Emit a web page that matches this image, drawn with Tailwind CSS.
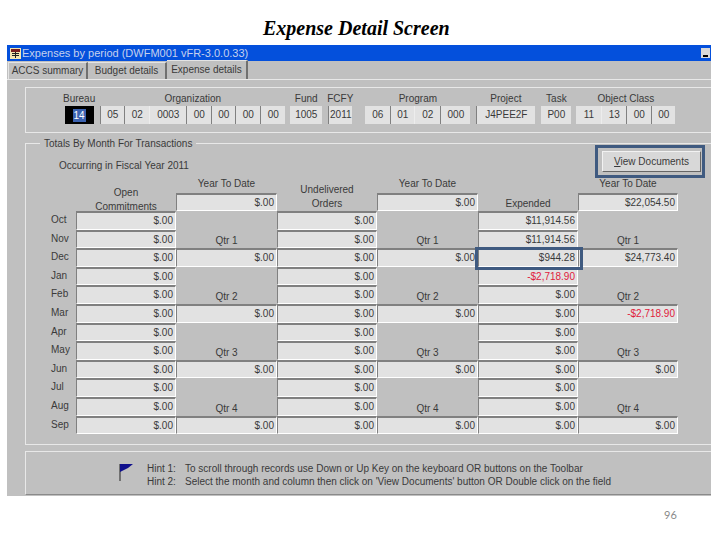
<!DOCTYPE html>
<html>
<head>
<meta charset="utf-8">
<title>Expense Detail Screen</title>
<script src="https://cdn.jsdelivr.net/npm/@tailwindcss/browser@4"></script>
</head>
<body class="bg-white w-[720px] h-[540px] overflow-hidden font-['Liberation_Sans',sans-serif]">

<h1 class="h-[45px] pt-[18px] pl-[263px] font-['Liberation_Serif',serif] font-bold italic text-[20px] leading-[20px] text-black">Expense Detail Screen</h1>

<div class="ml-[7px] w-[704px] h-[451px] bg-[#c0c0c0] text-[10px] leading-[13px] text-[#3a3a3a] flex flex-col">

	<!-- title bar -->
	<div class="h-[16px] bg-[#0450dc] flex items-center pl-[3px] pr-[1px] shrink-0">
		<svg width="11" height="11" viewBox="0 0 11 11" class="shrink-0"><rect width="11" height="11" fill="#f4e6b0"/><rect x="1" y="1" width="9" height="3" fill="#7a1f1f"/><rect x="2" y="5" width="7" height="1" fill="#222"/><rect x="2" y="7" width="7" height="1" fill="#222"/><rect x="5" y="4" width="1" height="6" fill="#222"/></svg>
		<span class="ml-[1px] text-[11px] text-[#c4d0ee] whitespace-nowrap">Expenses by period (DWFM001 vFR-3.0.0.33)</span>
		<span class="ml-auto w-[9px] h-[10px] bg-[#d8d8d8] flex items-end justify-center pb-[1px]"><span class="w-[5px] h-[2px] bg-black"></span></span>
	</div>

	<!-- tabs -->
	<div class="h-[19px] flex items-end pl-[1px] border-b border-[#e8e8e8] shrink-0">
		<div class="w-[80px] h-[17px] border-l border-t border-[#e4e4e4] border-r-2 border-r-[#707070] text-center pt-[1px] whitespace-nowrap">ACCS summary</div>
		<div class="w-[79px] h-[17px] border-t border-[#e4e4e4] border-r-2 border-r-[#707070] text-center pt-[1px] whitespace-nowrap">Budget details</div>
		<div class="w-[81px] h-[19px] border-t border-[#e4e4e4] border-r-2 border-r-[#707070] text-center pt-[2px] whitespace-nowrap">Expense details</div>
	</div>

	<div class="pl-[18px] pt-[7px] flex flex-col gap-[10px]">

		<!-- key fields -->
		<div class="h-[46px] border-y border-l border-[#e8e8e8] pl-[37px] pt-[3px] flex items-start">
			<div class="flex flex-col items-center mr-[5px]">
				<span class="h-[15px] pt-[1px]">Bureau</span>
				<div class="flex">
					<span class="w-[29px] h-[18px] bg-black flex items-center justify-center"><span class="bg-[#3b62b0] text-white px-[1px]">14</span></span>
				</div>
			</div>
			<div class="flex flex-col items-center mr-[5px]">
				<span class="h-[15px] pt-[1px]">Organization</span>
				<div class="flex">
					<span class="w-[24px] h-[18px] bg-[#e2e2e2] border-l border-[#808080] text-center leading-[18px]">05</span>
					<span class="w-[25px] h-[18px] bg-[#e2e2e2] border-l border-[#808080] text-center leading-[18px]">02</span>
					<span class="w-[37px] h-[18px] bg-[#e2e2e2] border-l border-[#ededed] text-center leading-[18px]">0003</span>
					<span class="w-[25px] h-[18px] bg-[#e2e2e2] border-l border-[#808080] text-center leading-[18px]">00</span>
					<span class="w-[24px] h-[18px] bg-[#e2e2e2] border-l border-[#808080] text-center leading-[18px]">00</span>
					<span class="w-[25px] h-[18px] bg-[#e2e2e2] border-l border-[#808080] text-center leading-[18px]">00</span>
					<span class="w-[25px] h-[18px] bg-[#e2e2e2] border-l border-[#808080] text-center leading-[18px]">00</span>
				</div>
			</div>
			<div class="flex flex-col items-center mr-[5px]">
				<span class="h-[15px] pt-[1px]">Fund</span>
				<span class="w-[32px] h-[18px] bg-[#e2e2e2] text-center leading-[18px]">1005</span>
			</div>
			<div class="flex flex-col items-center mr-[12px]">
				<span class="h-[15px] pt-[1px]">FCFY</span>
				<span class="w-[24px] h-[18px] bg-[#e2e2e2] border-l border-[#808080] text-center leading-[18px]">2011</span>
			</div>
			<div class="flex flex-col items-center mr-[6px]">
				<span class="h-[15px] pt-[1px]">Program</span>
				<div class="flex">
					<span class="w-[25px] h-[18px] bg-[#e2e2e2] text-center leading-[18px]">06</span>
					<span class="w-[24px] h-[18px] bg-[#e2e2e2] border-l border-[#808080] text-center leading-[18px]">01</span>
					<span class="w-[26px] h-[18px] bg-[#e2e2e2] border-l border-[#ededed] text-center leading-[18px]">02</span>
					<span class="w-[30px] h-[18px] bg-[#e2e2e2] border-l border-[#808080] text-center leading-[18px]">000</span>
				</div>
			</div>
			<div class="flex flex-col items-center mr-[6px]">
				<span class="h-[15px] pt-[1px]">Project</span>
				<span class="w-[59px] h-[18px] bg-[#e2e2e2] border-l border-[#808080] text-center leading-[18px]">J4PEE2F</span>
			</div>
			<div class="flex flex-col items-center mr-[5px]">
				<span class="h-[15px] pt-[1px]">Task</span>
				<span class="w-[30px] h-[18px] bg-[#e2e2e2] text-center leading-[18px]">P00</span>
			</div>
			<div class="flex flex-col items-center">
				<span class="h-[15px] pt-[1px]">Object Class</span>
				<div class="flex">
					<span class="w-[25px] h-[18px] bg-[#e2e2e2] text-center leading-[18px]">11</span>
					<span class="w-[25px] h-[18px] bg-[#e2e2e2] border-l border-[#ededed] text-center leading-[18px]">13</span>
					<span class="w-[25px] h-[18px] bg-[#e2e2e2] border-l border-[#808080] text-center leading-[18px]">00</span>
					<span class="w-[24px] h-[18px] bg-[#e2e2e2] border-l border-[#808080] text-center leading-[18px]">00</span>
				</div>
			</div>
		</div>

		<!-- totals -->
		<div class="relative h-[302px] border-y border-l border-[#e8e8e8]">
			<span class="absolute left-[14px] -top-[7px] bg-[#c0c0c0] px-[4px]">Totals By Month For Transactions</span>

			<div class="h-[33px] pl-[33px] pr-[6px] flex items-start justify-between">
				<span class="pt-[15px]">Occurring in Fiscal Year 2011</span>
				<div class="border-[3px] border-[#3f5a80] w-[110px] h-[33px] pl-[4px] pt-[3px] mt-[1px]">
					<button class="w-[99px] h-[21px] bg-[#d8d8d8] border-t border-l border-[#f2f2f2] border-r border-b border-r-[#666] border-b-[#666] text-[10px]"><u>V</u>iew Documents</button>
				</div>
			</div>

			<div class="ml-[21px] grid grid-cols-[29px_100px_101px_100px_101px_100px_100px] grid-rows-[34px_repeat(12,18.6px)]">
				<!-- headings -->
				<div></div>
				<div class="text-center self-end -mb-[3px] leading-[14px]">Open<br>Commitments</div>
				<div class="flex flex-col justify-end">
					<span class="text-center h-[16px]">Year To Date</span>
					<span class="h-[18px] bg-[#e2e2e2] border-t-2 border-l border-[#808080] border-b border-r border-b-white border-r-white text-right pr-[2px] leading-[15px]">$.00</span>
				</div>
				<div class="text-center self-center pt-[5px] leading-[14px]">Undelivered<br>Orders</div>
				<div class="flex flex-col justify-end">
					<span class="text-center h-[16px]">Year To Date</span>
					<span class="h-[18px] bg-[#e2e2e2] border-t-2 border-l border-[#808080] border-b border-r border-b-white border-r-white text-right pr-[2px] leading-[15px]">$.00</span>
				</div>
				<div class="text-center self-end pb-[1px]">Expended</div>
				<div class="flex flex-col justify-end">
					<span class="text-center h-[16px]">Year To Date</span>
					<span class="h-[18px] bg-[#e2e2e2] border-t-2 border-l border-[#808080] border-b border-r border-b-white border-r-white text-right pr-[2px] leading-[15px]">$22,054.50</span>
				</div>

				<!-- Oct -->
				<div class="pl-[4px] leading-[18px]">Oct</div>
				<div class="bg-[#e2e2e2] border-t-2 border-l border-[#808080] border-b border-r border-b-white border-r-white text-right pr-[2px] leading-[15px]">$.00</div>
				<div class="row-span-2 flex items-end justify-center pb-[1px]">Qtr 1</div>
				<div class="bg-[#e2e2e2] border-t-2 border-l border-[#808080] border-b border-r border-b-white border-r-white text-right pr-[2px] leading-[15px]">$.00</div>
				<div class="row-span-2 flex items-end justify-center pb-[1px]">Qtr 1</div>
				<div class="bg-[#e2e2e2] border-t-2 border-l border-[#808080] border-b border-r border-b-white border-r-white text-right pr-[2px] leading-[15px]">$11,914.56</div>
				<div class="row-span-2 flex items-end justify-center pb-[1px]">Qtr 1</div>
				<!-- Nov -->
				<div class="pl-[4px] leading-[18px]">Nov</div>
				<div class="bg-[#e2e2e2] border-t-2 border-l border-[#808080] border-b border-r border-b-white border-r-white text-right pr-[2px] leading-[15px]">$.00</div>
				<div class="bg-[#e2e2e2] border-t-2 border-l border-[#808080] border-b border-r border-b-white border-r-white text-right pr-[2px] leading-[15px]">$.00</div>
				<div class="bg-[#e2e2e2] border-t-2 border-l border-[#808080] border-b border-r border-b-white border-r-white text-right pr-[2px] leading-[15px]">$11,914.56</div>
				<!-- Dec -->
				<div class="pl-[4px] leading-[18px]">Dec</div>
				<div class="bg-[#e2e2e2] border-t-2 border-l border-[#808080] border-b border-r border-b-white border-r-white text-right pr-[2px] leading-[15px]">$.00</div>
				<div class="bg-[#e2e2e2] border-t-2 border-l border-[#808080] border-b border-r border-b-white border-r-white text-right pr-[2px] leading-[15px]">$.00</div>
				<div class="bg-[#e2e2e2] border-t-2 border-l border-[#808080] border-b border-r border-b-white border-r-white text-right pr-[2px] leading-[15px]">$.00</div>
				<div class="bg-[#e2e2e2] border-t-2 border-l border-[#808080] border-b border-r border-b-white border-r-white text-right pr-[2px] leading-[15px]">$.00</div>
				<div class="bg-[#e2e2e2] border-t-2 border-l border-[#808080] border-b border-r border-b-white border-r-white text-right pr-[2px] leading-[15px]">$944.28</div>
				<div class="bg-[#e2e2e2] border-t-2 border-l border-[#808080] border-b border-r border-b-white border-r-white text-right pr-[2px] leading-[15px]">$24,773.40</div>
				<!-- Jan -->
				<div class="pl-[4px] leading-[18px]">Jan</div>
				<div class="bg-[#e2e2e2] border-t-2 border-l border-[#808080] border-b border-r border-b-white border-r-white text-right pr-[2px] leading-[15px]">$.00</div>
				<div class="row-span-2 flex items-end justify-center pb-[1px]">Qtr 2</div>
				<div class="bg-[#e2e2e2] border-t-2 border-l border-[#808080] border-b border-r border-b-white border-r-white text-right pr-[2px] leading-[15px]">$.00</div>
				<div class="row-span-2 flex items-end justify-center pb-[1px]">Qtr 2</div>
				<div class="bg-[#e2e2e2] border-t-2 border-l border-[#808080] border-b border-r border-b-white border-r-white text-right pr-[2px] leading-[15px] text-[#e0203a]">-$2,718.90</div>
				<div class="row-span-2 flex items-end justify-center pb-[1px]">Qtr 2</div>
				<!-- Feb -->
				<div class="pl-[4px] leading-[18px]">Feb</div>
				<div class="bg-[#e2e2e2] border-t-2 border-l border-[#808080] border-b border-r border-b-white border-r-white text-right pr-[2px] leading-[15px]">$.00</div>
				<div class="bg-[#e2e2e2] border-t-2 border-l border-[#808080] border-b border-r border-b-white border-r-white text-right pr-[2px] leading-[15px]">$.00</div>
				<div class="bg-[#e2e2e2] border-t-2 border-l border-[#808080] border-b border-r border-b-white border-r-white text-right pr-[2px] leading-[15px]">$.00</div>
				<!-- Mar -->
				<div class="pl-[4px] leading-[18px]">Mar</div>
				<div class="bg-[#e2e2e2] border-t-2 border-l border-[#808080] border-b border-r border-b-white border-r-white text-right pr-[2px] leading-[15px]">$.00</div>
				<div class="bg-[#e2e2e2] border-t-2 border-l border-[#808080] border-b border-r border-b-white border-r-white text-right pr-[2px] leading-[15px]">$.00</div>
				<div class="bg-[#e2e2e2] border-t-2 border-l border-[#808080] border-b border-r border-b-white border-r-white text-right pr-[2px] leading-[15px]">$.00</div>
				<div class="bg-[#e2e2e2] border-t-2 border-l border-[#808080] border-b border-r border-b-white border-r-white text-right pr-[2px] leading-[15px]">$.00</div>
				<div class="bg-[#e2e2e2] border-t-2 border-l border-[#808080] border-b border-r border-b-white border-r-white text-right pr-[2px] leading-[15px]">$.00</div>
				<div class="bg-[#e2e2e2] border-t-2 border-l border-[#808080] border-b border-r border-b-white border-r-white text-right pr-[2px] leading-[15px] text-[#e0203a]">-$2,718.90</div>
				<!-- Apr -->
				<div class="pl-[4px] leading-[18px]">Apr</div>
				<div class="bg-[#e2e2e2] border-t-2 border-l border-[#808080] border-b border-r border-b-white border-r-white text-right pr-[2px] leading-[15px]">$.00</div>
				<div class="row-span-2 flex items-end justify-center pb-[1px]">Qtr 3</div>
				<div class="bg-[#e2e2e2] border-t-2 border-l border-[#808080] border-b border-r border-b-white border-r-white text-right pr-[2px] leading-[15px]">$.00</div>
				<div class="row-span-2 flex items-end justify-center pb-[1px]">Qtr 3</div>
				<div class="bg-[#e2e2e2] border-t-2 border-l border-[#808080] border-b border-r border-b-white border-r-white text-right pr-[2px] leading-[15px]">$.00</div>
				<div class="row-span-2 flex items-end justify-center pb-[1px]">Qtr 3</div>
				<!-- May -->
				<div class="pl-[4px] leading-[18px]">May</div>
				<div class="bg-[#e2e2e2] border-t-2 border-l border-[#808080] border-b border-r border-b-white border-r-white text-right pr-[2px] leading-[15px]">$.00</div>
				<div class="bg-[#e2e2e2] border-t-2 border-l border-[#808080] border-b border-r border-b-white border-r-white text-right pr-[2px] leading-[15px]">$.00</div>
				<div class="bg-[#e2e2e2] border-t-2 border-l border-[#808080] border-b border-r border-b-white border-r-white text-right pr-[2px] leading-[15px]">$.00</div>
				<!-- Jun -->
				<div class="pl-[4px] leading-[18px]">Jun</div>
				<div class="bg-[#e2e2e2] border-t-2 border-l border-[#808080] border-b border-r border-b-white border-r-white text-right pr-[2px] leading-[15px]">$.00</div>
				<div class="bg-[#e2e2e2] border-t-2 border-l border-[#808080] border-b border-r border-b-white border-r-white text-right pr-[2px] leading-[15px]">$.00</div>
				<div class="bg-[#e2e2e2] border-t-2 border-l border-[#808080] border-b border-r border-b-white border-r-white text-right pr-[2px] leading-[15px]">$.00</div>
				<div class="bg-[#e2e2e2] border-t-2 border-l border-[#808080] border-b border-r border-b-white border-r-white text-right pr-[2px] leading-[15px]">$.00</div>
				<div class="bg-[#e2e2e2] border-t-2 border-l border-[#808080] border-b border-r border-b-white border-r-white text-right pr-[2px] leading-[15px]">$.00</div>
				<div class="bg-[#e2e2e2] border-t-2 border-l border-[#808080] border-b border-r border-b-white border-r-white text-right pr-[2px] leading-[15px]">$.00</div>
				<!-- Jul -->
				<div class="pl-[4px] leading-[18px]">Jul</div>
				<div class="bg-[#e2e2e2] border-t-2 border-l border-[#808080] border-b border-r border-b-white border-r-white text-right pr-[2px] leading-[15px]">$.00</div>
				<div class="row-span-2 flex items-end justify-center pb-[1px]">Qtr 4</div>
				<div class="bg-[#e2e2e2] border-t-2 border-l border-[#808080] border-b border-r border-b-white border-r-white text-right pr-[2px] leading-[15px]">$.00</div>
				<div class="row-span-2 flex items-end justify-center pb-[1px]">Qtr 4</div>
				<div class="bg-[#e2e2e2] border-t-2 border-l border-[#808080] border-b border-r border-b-white border-r-white text-right pr-[2px] leading-[15px]">$.00</div>
				<div class="row-span-2 flex items-end justify-center pb-[1px]">Qtr 4</div>
				<!-- Aug -->
				<div class="pl-[4px] leading-[18px]">Aug</div>
				<div class="bg-[#e2e2e2] border-t-2 border-l border-[#808080] border-b border-r border-b-white border-r-white text-right pr-[2px] leading-[15px]">$.00</div>
				<div class="bg-[#e2e2e2] border-t-2 border-l border-[#808080] border-b border-r border-b-white border-r-white text-right pr-[2px] leading-[15px]">$.00</div>
				<div class="bg-[#e2e2e2] border-t-2 border-l border-[#808080] border-b border-r border-b-white border-r-white text-right pr-[2px] leading-[15px]">$.00</div>
				<!-- Sep -->
				<div class="pl-[4px] leading-[18px]">Sep</div>
				<div class="bg-[#e2e2e2] border-t-2 border-l border-[#808080] border-b border-r border-b-white border-r-white text-right pr-[2px] leading-[15px]">$.00</div>
				<div class="bg-[#e2e2e2] border-t-2 border-l border-[#808080] border-b border-r border-b-white border-r-white text-right pr-[2px] leading-[15px]">$.00</div>
				<div class="bg-[#e2e2e2] border-t-2 border-l border-[#808080] border-b border-r border-b-white border-r-white text-right pr-[2px] leading-[15px]">$.00</div>
				<div class="bg-[#e2e2e2] border-t-2 border-l border-[#808080] border-b border-r border-b-white border-r-white text-right pr-[2px] leading-[15px]">$.00</div>
				<div class="bg-[#e2e2e2] border-t-2 border-l border-[#808080] border-b border-r border-b-white border-r-white text-right pr-[2px] leading-[15px]">$.00</div>
				<div class="bg-[#e2e2e2] border-t-2 border-l border-[#808080] border-b border-r border-b-white border-r-white text-right pr-[2px] leading-[15px]">$.00</div>
			</div>

			<!-- highlight round the Dec expended cell -->
			<div class="absolute left-[449px] top-[103px] w-[108px] h-[23px] border-[3px] border-[#3f5a80]"></div>
		</div>

		<!-- hints -->
		<div class="h-[44px] border-t border-b border-l border-t-[#e8e8e8] border-b-[#8a8a8a] border-l-[#e8e8e8] -mt-[4px] flex items-start pt-[10px]">
			<svg width="14" height="18" viewBox="0 0 14 18" class="ml-[93px] mt-[2px] shrink-0"><path d="M1 0v17" stroke="#222" stroke-width="1"/><path d="M1 0h13l-5 4-8 4z" fill="#10108c"/></svg>
			<div class="ml-[14px] leading-[13px] whitespace-nowrap">
				<div class="flex"><span class="w-[38px]">Hint 1:</span><span>To scroll through records use Down or Up Key on the keyboard OR buttons on the Toolbar</span></div>
				<div class="flex"><span class="w-[38px]">Hint 2:</span><span>Select the month and column then click on 'View Documents' button OR Double click on the field</span></div>
			</div>
		</div>
	</div>
</div>

<p class="ml-[664px] mt-[12px] font-['Lato',sans-serif] text-[11px] leading-[14px] text-[#8a8a8a]">96</p>

</body>
</html>
